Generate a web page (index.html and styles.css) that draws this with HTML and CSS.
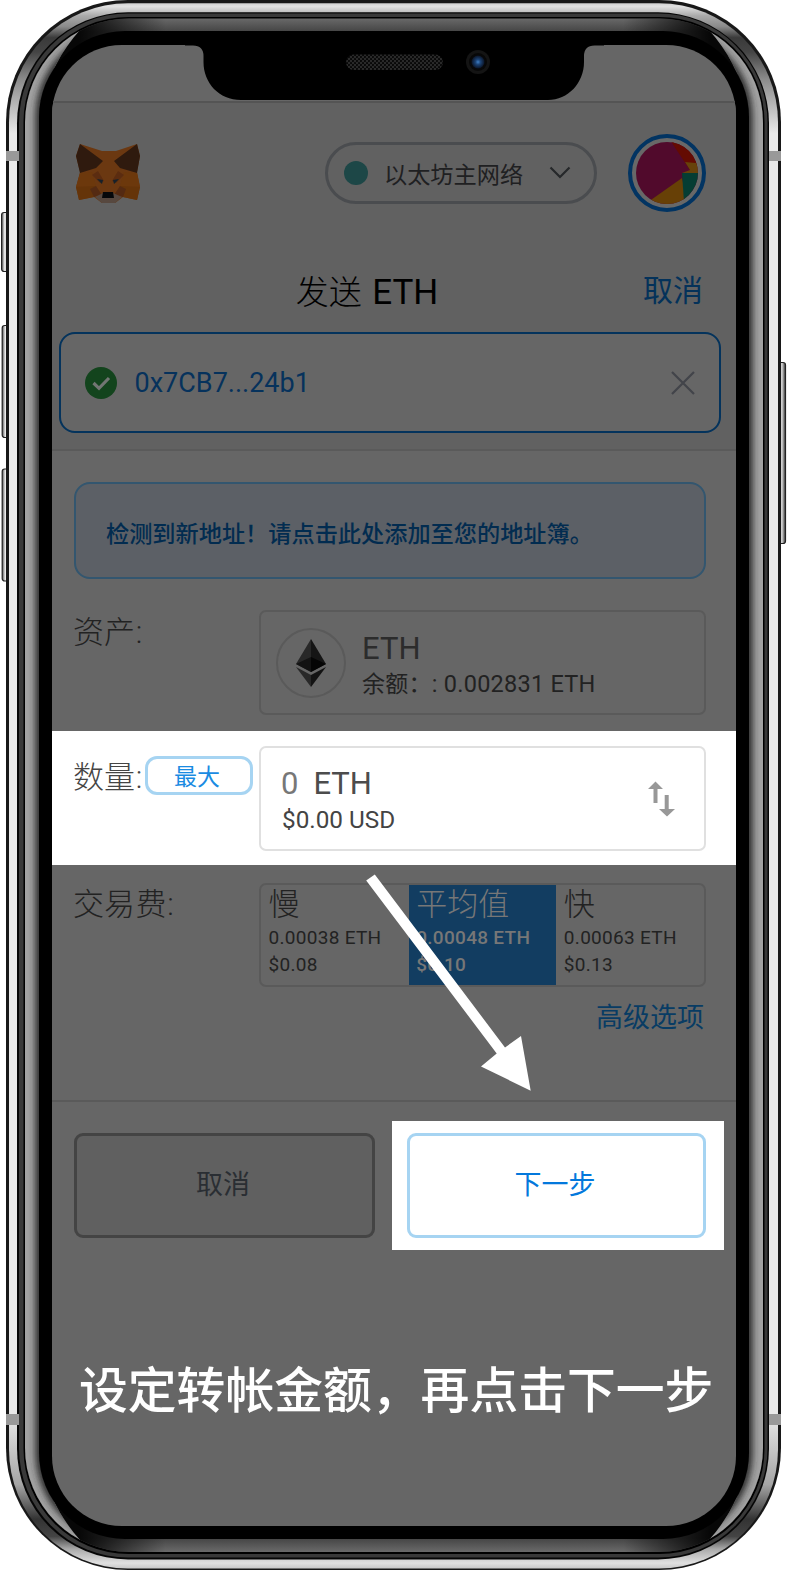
FILE: index.html
```html
<!DOCTYPE html>
<html lang="zh-CN">
<head>
<meta charset="utf-8">
<title>发送 ETH</title>
<link rel="stylesheet" href="styles.css">
</head>
<body>
<div class="phone">
  <svg class="frame" width="789" height="1571" viewBox="0 0 789 1571">
    <defs>
      <linearGradient id="steel" x1="0" y1="0" x2="0" y2="1571" gradientUnits="userSpaceOnUse">
        <stop offset="0" stop-color="#bbb"/><stop offset=".004" stop-color="#e2e2e2"/><stop offset=".01" stop-color="#aaa"/>
        <stop offset=".017" stop-color="#8a8a8a"/><stop offset=".024" stop-color="#3a3a3a"/><stop offset=".033" stop-color="#444"/><stop offset=".05" stop-color="#8a8a8a"/>
        <stop offset=".085" stop-color="#e9e9e9"/><stop offset=".9" stop-color="#e9e9e9"/><stop offset=".945" stop-color="#a5a5a5"/>
        <stop offset=".967" stop-color="#333"/><stop offset=".978" stop-color="#444"/><stop offset=".986" stop-color="#aaa"/><stop offset=".995" stop-color="#e0e0e0"/><stop offset="1" stop-color="#bbb"/>
      </linearGradient>
      <linearGradient id="ends" x1="0" y1="18" x2="0" y2="1552" gradientUnits="userSpaceOnUse">
        <stop offset="0" stop-color="#6a6a6a"/><stop offset=".009" stop-color="#444"/><stop offset=".991" stop-color="#444"/><stop offset="1" stop-color="#6a6a6a"/>
      </linearGradient>
      <linearGradient id="fade" x1="0" y1="0" x2="789" y2="0" gradientUnits="userSpaceOnUse">
        <stop offset=".1" stop-color="#000" stop-opacity=".9"/><stop offset=".21" stop-color="#000" stop-opacity="0"/><stop offset=".79" stop-color="#000" stop-opacity="0"/><stop offset=".9" stop-color="#000" stop-opacity=".9"/>
      </linearGradient>
      <linearGradient id="key" x1="0" y1="0" x2="1" y2="0">
        <stop offset="0" stop-color="#555"/><stop offset=".35" stop-color="#eee"/><stop offset=".65" stop-color="#bbb"/><stop offset="1" stop-color="#333"/>
      </linearGradient>
      <filter id="soft" x="-5%" y="-5%" width="110%" height="110%"><feGaussianBlur stdDeviation="3.5"/></filter>
      <clipPath id="bezel"><rect x="25" y="18.5" width="738" height="1533.5" rx="104"/></clipPath>
      <clipPath id="sides"><path d="M20 0L80 30C62 50 48 75 42 105V1465C48 1495 62 1520 80 1540L20 1571ZM769 0L709 30C727 50 741 75 747 105V1465C741 1495 727 1520 709 1540L769 1571Z"/></clipPath>
    </defs>
    <g fill="url(#key)" stroke="#222" stroke-width="1.2">
      <rect x="1.6" y="212.5" width="9" height="59" rx="2.5"/><rect x="2.2" y="325.5" width="9" height="112" rx="2.5"/><rect x="2.2" y="469" width="9" height="112" rx="2.5"/><rect x="777" y="362.500" width="8.500" height="181" rx="2.500"/>
    </g>
    <rect x="6" y="0" width="775" height="1570" rx="122" fill="#181818"/>
    <rect x="9" y="3.200" width="769" height="1565.300" rx="119" fill="url(#steel)"/>
    <rect x="17" y="12.300" width="752" height="1547.200" rx="111" fill="#050505"/>
    <rect x="19" y="13.500" width="748.500" height="1544" rx="109" fill="#393939"/>
    <rect x="23.500" y="17" width="741" height="1537" rx="105" fill="#000"/>
    <g clip-path="url(#bezel)">
      <rect x="25" y="18" width="738" height="1534" fill="url(#ends)"/>
      <rect x="25" y="18" width="738" height="1534" fill="url(#fade)"/>
      <g clip-path="url(#sides)">
        <rect x="20" y="18" width="749" height="1534" fill="#a2a2a2"/>
        <rect x="41" y="33" width="706" height="1504" rx="84" fill="none" stroke="#262626" stroke-width="11" filter="url(#soft)"/>
      </g>
    </g>
    <rect x="39" y="31" width="710" height="1508" rx="86" fill="#000"/>
    <g fill="#999"><rect x="6" y="151" width="13" height="10"/><rect x="769" y="151" width="12" height="10"/><rect x="6" y="1414" width="13" height="11"/><rect x="769" y="1414" width="12" height="11"/></g>
  </svg>

  <main class="screen">
    <div class="status"></div>
    <header class="top">
      <div class="bar">
        <svg class="fox" width="64" height="61" viewBox="0 0 64 61">
          <path d="M4 1L26 8H40L61 1L64 13L61 29L64 44L61 57L47 54L39 60H26L18 54L3 57L0 44L4 29L0 13Z" fill="#6b3811"/>
          <path d="M4 1L27 18L20 25L4 30L0 13ZM61 1L38 18L44 25L61 30L64 13Z" fill="#2f1a0e"/>
          <path d="M4 30L16 29L20 43L0 44ZM61 30L48 29L44 43L64 44Z" fill="#6c380c"/>
          <path d="M16 32L22 28L28 38L24 40ZM48 32L42 28L36 38L40 40Z" fill="#5b2c10"/>
          <path d="M0 44L20 43L18 54L3 57ZM64 44L44 43L47 54L61 57Z" fill="#653409"/>
          <path d="M14 46L20 43L26 52L18 54ZM50 46L44 43L38 52L47 54Z" fill="#542a12"/>
          <path d="M21 36L27 37L26 41ZM43 36L37 37L38 41Z" fill="#17212a"/>
          <path d="M19 54L27 50H37L46 54L39 60H26Z" fill="#57483f"/><path d="M27 49H37L38 55H26Z" fill="#06080a"/>
        </svg>
        <div class="network"><i class="dot"></i><span>以太坊主网络</span>
          <svg width="22" height="14" viewBox="0 0 22 14"><path d="M1.500 1.500L11 11L20.500 1.500" fill="none" stroke="#26282a" stroke-width="2.200"/></svg></div>
        <svg class="avatar" width="78" height="78" viewBox="0 0 78 78">
          <defs><clipPath id="face"><circle cx="39" cy="39" r="31"/></clipPath></defs>
          <circle cx="39" cy="39" r="37" fill="#686868" stroke="#023462" stroke-width="4"/>
          <g clip-path="url(#face)"><rect width="78" height="78" fill="#510a2c"/><path d="M42 6L62 36L78 26V0Z" fill="#640b02"/><path d="M57 28L78 30V39H54L62 36Z" fill="#67420a"/><path d="M54 44L20 68L39 78L60 70Z" fill="#674006"/><path d="M54 39H78V60L56 68Z" fill="#053d33"/></g>
        </svg>
      </div>
      <div class="heading"><h1><span class="send">发送</span> <span class="coin">ETH</span></h1><a class="quit">取消</a></div>
      <div class="address">
        <svg width="32" height="32" viewBox="0 0 32 32"><circle cx="16" cy="16" r="16" fill="#13441d"/><path d="M8.500 16L14 21.300L24 11" fill="none" stroke="#727673" stroke-width="3.200"/></svg>
        <span>0x7CB7...24b1</span>
        <svg class="close" width="24" height="24" viewBox="0 0 24 24"><path d="M1 1L23 23M23 1L1 23" stroke="#42444a" stroke-width="2.200"/></svg>
      </div>
    </header>
    <div class="notice">检测到新地址！请点击此处添加至您的地址簿。</div>
    <section class="row asset">
      <label>资产:</label>
      <div class="box asset-box">
        <svg width="70" height="70" viewBox="0 0 70 70"><circle cx="35" cy="35" r="34" fill="none" stroke="#5a5a5a" stroke-width="2"/><path d="M35 11L20 36L35 44Z" fill="#282828"/><path d="M35 11L50 36L35 44Z" fill="#151515"/><path d="M35 29L20 36L35 44Z" fill="#131313"/><path d="M35 29L50 36L35 44Z" fill="#050505"/><path d="M20 39L35 47V59Z" fill="#282828"/><path d="M50 39L35 47V59Z" fill="#131313"/></svg>
        <div class="holding"><div class="value">ETH</div><div class="balance"><span>余额：</span>: 0.002831 ETH</div></div>
      </div>
    </section>
    <section class="row amount">
      <label>数量:</label><button class="max">最大</button>
      <div class="box amount-box">
        <div><div class="value"><span class="zero">0</span>ETH</div><div class="usd">$0.00 USD</div></div>
        <svg width="28" height="36" viewBox="0 0 28 36"><path d="M0 8L7.500 .5L15 8H9.500V22H5.500V8ZM11 28H16.700V14H20.700V28H27L19 35.500Z" fill="#989898"/></svg>
      </div>
    </section>
    <section class="row fee">
      <label>交易费:</label>
      <div class="box speeds">
        <div class="speed"><b>慢</b><span>0.00038 ETH</span><span>$0.08</span></div>
        <div class="speed on"><b>平均值</b><span>0.00048 ETH</span><span>$0.10</span></div>
        <div class="speed"><b>快</b><span>0.00063 ETH</span><span>$0.13</span></div>
      </div>
    </section>
    <a class="advanced">高级选项</a>
    <footer class="actions"><button class="btn cancel">取消</button><div class="spot"><button class="btn next">下一步</button></div></footer>
    <p class="caption">设定转帐金额，<span>再点击下一步</span></p>
  </main>

  <svg class="over" width="789" height="1571" viewBox="0 0 789 1571">
    <defs>
      <pattern id="mesh" width="4" height="4" patternUnits="userSpaceOnUse"><rect width="4" height="4" fill="#292929"/><circle cx="1" cy="1" r="1.050" fill="#050505"/><circle cx="3" cy="3" r="1.050" fill="#050505"/></pattern>
      <radialGradient id="lens"><stop offset="0" stop-color="#3f7fc4"/><stop offset=".4" stop-color="#1b4274"/><stop offset="1" stop-color="#0b1426"/></radialGradient>
    </defs>
    <path d="M185 44V45.400H193Q203.500 45.400 203.500 56V62C203.500 83 219 100 241 100H548C568 100 584 83 584 62V56Q584 45.400 594.500 45.400H604V44Z" fill="#000"/>
    <rect x="346" y="54.500" width="97" height="15.500" rx="7.750" fill="url(#mesh)"/>
    <circle cx="478" cy="62" r="12" fill="#141414"/><circle cx="478" cy="62" r="9" fill="#080808"/><circle cx="478" cy="62" r="6.500" fill="url(#lens)"/>
    <path d="M366.200 880.500L374.800 874.500L505 1047.500L521 1036L530.700 1090.700L481 1066.500L496.700 1053.500Z" fill="#fff"/>
  </svg>
</div>
</body>
</html>
```
FILE: styles.css
```css
* { box-sizing: border-box; }
body { margin: 0; background: #fff; font-family: Roboto, "Noto Sans CJK SC", sans-serif; color: #222; }
button { font: inherit; padding: 0; margin: 0; }
.phone { position: relative; width: 789px; height: 1571px; padding: 45px 53px 0 52px; overflow: hidden; }
.frame, .over { position: absolute; left: 0; top: 0; }
.over { pointer-events: none; }
.screen { position: relative; width: 684px; height: 1481px; border-radius: 70px; background: #666; overflow: hidden; }
.status { height: 56px; }
.top { height: 350px; background: #616161; border-top: 2px solid #545454; border-bottom: 2px solid #5a5a5a; }
.bar { display: flex; align-items: center; height: 140px; padding: 0 30px 0 24px; }
.network { display: flex; align-items: center; width: 272px; height: 62px; margin-left: 185px; padding: 0 23px 0 16px; border: 3px solid #4a4c4f; border-radius: 31px; font-size: 23.200px; line-height: 30px; color: #1f2022; }
.network span { flex: 1; margin-left: 16px; padding-top: 3px; }
.dot { width: 24px; height: 24px; border-radius: 50%; background: #1d4747; }
.avatar { margin-left: auto; }
.heading { position: relative; display: flex; justify-content: center; height: 90px; padding-top: 25px; }
h1 { margin: 0 54px 0 0; font-size: 34px; line-height: 48px; font-weight: 400; color: #000; white-space: nowrap; }
.send { font-size: 33px; font-weight: 300; }
.coin { font-size: 35px; margin-left: 2px; }
.quit { position: absolute; right: 33px; top: 26px; font-size: 30px; line-height: 44px; color: #04325a; }
.address { display: flex; align-items: center; height: 101px; margin: -1px 15px 0 6.500px; padding: 0 24px; border: 2.500px solid #04335c; border-radius: 16px; background: #666; font-size: 27px; color: #06325c; }
.address span { flex: 1; margin-left: 18px; }
.notice { height: 97px; margin: 31px 30px 0 22px; padding-left: 30px; border: 2px solid #33566f; border-radius: 16px; background: #5c6066; color: #022c50; font-size: 23.200px; font-weight: 500; line-height: 100px; white-space: nowrap; }
.row { position: relative; display: flex; padding: 0 30px 0 21px; }
.row label { font-size: 31px; line-height: 40px; font-weight: 300; white-space: nowrap; }
.row label::first-letter { letter-spacing: 0; }
.box { width: 447px; height: 105px; margin-left: auto; border: 2px solid #5a5a5a; border-radius: 7px; display: flex; }
.asset { height: 152px; padding-top: 31px; }
.asset label { margin-top: 3px; letter-spacing: .7px; }
.asset-box { align-items: center; padding-left: 15px; gap: 16px; }
.holding { padding-top: 8px; }
.value { font-size: 31px; line-height: 36px; font-weight: 400; color: #2c2c2c; }
.balance { font-size: 23.500px; line-height: 34px; letter-spacing: .25px; white-space: nowrap; }
.balance span { font-size: 23px; }
.amount { height: 134px; padding-top: 15px; background: #fff; color: #444; }
.amount label { margin-top: 12px; width: 72px; letter-spacing: .7px; }
.max { width: 108px; height: 39px; margin-top: 10px; padding: 4px 4px 0 0; border: 3px solid #a6d4f2; border-radius: 12px; background: #fff; color: #1a8be2; font-size: 23px; line-height: 29px; }
.amount-box { border-color: #e0e0e0; justify-content: space-between; padding: 18px 28px 0 20px; }
.amount-box .value { color: #4c4c4c; }
.amount-box svg { margin-top: 15px; }
.amount-box .value .zero { margin-right: 15px; color: #777; }
.usd { font-size: 24.300px; line-height: 36px; margin-left: 1px; }
.fee { height: 122px; padding-top: 18px; }
.fee label { margin-top: 2px; letter-spacing: .6px; }
.speeds { height: 104px; }
.speed { flex: 1; display: flex; flex-direction: column; padding-left: 7.500px; white-space: nowrap; }
.speed b { font-size: 31px; line-height: 40px; font-weight: 300; }
.speed span { font-size: 19px; line-height: 27px; letter-spacing: .3px; position: relative; top: -1px; }
.speed.on { background: #123d61; color: #777; }
.speed.on span { font-weight: 500; }
.advanced { display: block; height: 113px; padding: 11px 32px 0 0; text-align: right; font-size: 27px; line-height: 40px; color: #083c64; }
.actions { display: flex; height: 150px; padding-left: 22px; border-top: 2px solid #5a5a5a; }
.btn { display: block; flex: none; width: 301px; height: 105px; border: 3px solid #444; border-radius: 9px; background: #606060; color: #2a2e33; font-size: 27px; line-height: 99px; text-align: center; }
.cancel { margin-top: 31px; padding-right: 3px; }
.spot { width: 332px; height: 129px; margin: 19px 0 0 17px; padding: 12px 15px; background: #fff; }
.next { width: 299px; padding-right: 3px; background: #fff; border-color: #a6d4f2; color: #0378dc; }
.caption { margin: 106px 0 0 27px; font-size: 48.800px; line-height: 72px; font-weight: 500; color: #fff; white-space: nowrap; }
```
